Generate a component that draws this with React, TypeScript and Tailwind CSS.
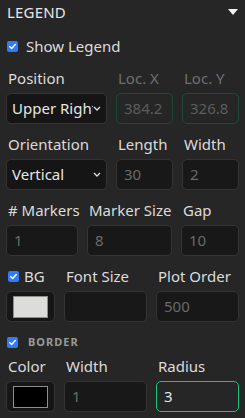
import React from 'react';

function Check({ className = '' }: { className?: string }) {
    return (
        <span className={`inline-flex items-center justify-center w-[11px] h-[11px] rounded-[2px] bg-[#2f7cf6] shrink-0 ${className}`}>
            <svg width="9" height="9" viewBox="0 0 10 10" fill="none">
                <path d="M2 5.2 L4.1 7.2 L8 2.8" stroke="white" strokeWidth="1.7" strokeLinecap="round" strokeLinejoin="round" />
            </svg>
        </span>
    );
}

function Label({ children, dim }: { children: React.ReactNode, dim?: boolean }) {
    return (
        <div className={`h-5 leading-5 mb-[5px] pl-[2px] text-[15px] whitespace-nowrap ${dim ? 'text-[#6f6f6f]' : 'text-[#dcdcdc]'}`}>
            {children}
        </div>
    );
}

function Box({ value, variant = 'normal' }: { value?: string, variant?: 'normal' | 'loc' | 'focus' }) {
    const styles = {
        normal: 'bg-[#181818] border-[#343434] text-[#6a6a6a]',
        loc: 'bg-[#262626] border-[#1d4a39] text-[#5c5c5c]',
        focus: 'bg-[#262626] border-[#19c37d] text-[#e6e6e6]',
    }[variant];
    return (
        <div className={`h-[31px] rounded-[5px] border px-[7px] flex items-center text-[15px] ${styles}`}>
            {value}
        </div>
    );
}

function Swatch({ color }: { color: string }) {
    return (
        <div className="h-[31px] rounded-[5px] border border-[#343434] bg-[#161616] flex items-center px-[6px]">
            <div className={`w-[36px] h-[22px] border border-[#8e8e8e] ${color}`} />
        </div>
    );
}

export default function App() {
    return (
        <div className="w-[245px] h-[418px] bg-[#262626] px-[6px] overflow-hidden" style={{ fontFamily: '"Noto Sans", sans-serif' }}>
            <div className="flex items-center justify-between h-5 mt-[2px] pl-[1px]">
                <span className="text-[15px] text-[#e6e6e6] tracking-[0.2px]">LEGEND</span>
                <svg width="10" height="6" viewBox="0 0 10 6" className="mr-[1px]">
                    <path d="M0 0 H10 L5 6 Z" fill="#f2f2f2" />
                </svg>
            </div>

            <div className="flex items-center gap-[8px] h-5 mt-[14px] pl-[1px]">
                <Check />
                <span className="text-[15px] text-[#dcdcdc]">Show Legend</span>
            </div>

            <div className="grid grid-cols-[101px_57px_57px] gap-x-[9px] mt-[12px]">
                <div>
                    <Label>Position</Label>
                    <div className="h-[31px] rounded-[5px] border border-[#343434] bg-[#151515] flex items-center pl-[5px] pr-[5px] text-[15px] text-[#e6e6e6] overflow-hidden">
                        <span className="whitespace-nowrap overflow-hidden w-[84px]">Upper Right</span>
                        <svg width="8" height="5" viewBox="0 0 8 5" className="ml-auto shrink-0">
                            <path d="M1 1 L4 4 L7 1" stroke="#e0e0e0" strokeWidth="1.3" fill="none" />
                        </svg>
                    </div>
                </div>
                <div>
                    <Label dim>Loc. X</Label>
                    <Box value="384.2" variant="loc" />
                </div>
                <div>
                    <Label dim>Loc. Y</Label>
                    <Box value="326.8" variant="loc" />
                </div>
            </div>

            <div className="grid grid-cols-[101px_57px_57px] gap-x-[9px] mt-[10px]">
                <div>
                    <Label>Orientation</Label>
                    <div className="h-[31px] rounded-[5px] border border-[#343434] bg-[#151515] flex items-center pl-[5px] pr-[5px] text-[15px] text-[#e6e6e6]">
                        <span>Vertical</span>
                        <svg width="8" height="5" viewBox="0 0 8 5" className="ml-auto shrink-0">
                            <path d="M1 1 L4 4 L7 1" stroke="#e0e0e0" strokeWidth="1.3" fill="none" />
                        </svg>
                    </div>
                </div>
                <div>
                    <Label>Length</Label>
                    <Box value="30" />
                </div>
                <div>
                    <Label>Width</Label>
                    <Box value="2" />
                </div>
            </div>

            <div className="grid grid-cols-[72px_85px_58px] gap-x-[9px] mt-[10px]">
                <div>
                    <Label># Markers</Label>
                    <Box value="1" />
                </div>
                <div>
                    <Label>Marker Size</Label>
                    <Box value="8" />
                </div>
                <div>
                    <Label>Gap</Label>
                    <Box value="10" />
                </div>
            </div>

            <div className="grid grid-cols-[49px_83px_83px] gap-x-[9px] mt-[10px]">
                <div>
                    <div className="h-5 mb-[5px] flex items-center gap-[5px] pl-[2px]">
                        <Check />
                        <span className="text-[15px] text-[#dcdcdc]">BG</span>
                    </div>
                    <Swatch color="bg-[#dcdcd8]" />
                </div>
                <div>
                    <Label>Font Size</Label>
                    <Box />
                </div>
                <div>
                    <Label>Plot Order</Label>
                    <Box value="500" />
                </div>
            </div>

            <div className="flex items-center gap-[10px] h-4 mt-[12px] pl-[1px]">
                <Check />
                <span className="text-[11px] font-bold text-[#9a9a9a] tracking-[1px]">BORDER</span>
            </div>

            <div className="grid grid-cols-[49px_83px_83px] gap-x-[9px] mt-[6px]">
                <div>
                    <Label>Color</Label>
                    <Swatch color="bg-black" />
                </div>
                <div>
                    <Label>Width</Label>
                    <Box value="1" />
                </div>
                <div>
                    <Label>Radius</Label>
                    <Box value="3" variant="focus" />
                </div>
            </div>
        </div>
    );
}
